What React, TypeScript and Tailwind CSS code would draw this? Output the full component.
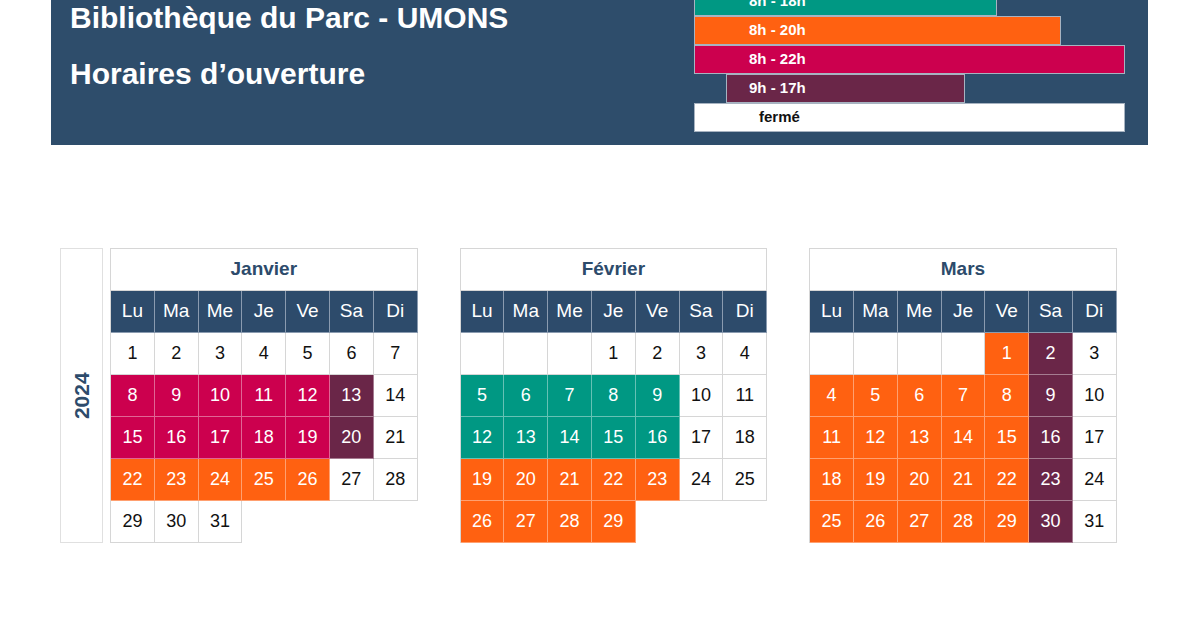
type Tone = "w" | "t" | "o" | "c" | "p";

const toneClass: Record<Tone, string> = {
  w: "bg-white text-[#111] border-[#d6d6d6]",
  t: "bg-[#009883] text-white border-white/40",
  o: "bg-[#ff6111] text-white border-white/40",
  c: "bg-[#cc004e] text-white border-white/40",
  p: "bg-[#6a2648] text-white border-white/40",
};

const days = ["Lu", "Ma", "Me", "Je", "Ve", "Sa", "Di"];

interface Month {
  name: string;
  offset: number;
  tones: Tone[];
}

// one letter per day of the month
const parse = (s: string) => s.split("") as Tone[];

const months: Month[] = [
  { name: "Janvier", offset: 0, tones: parse("wwwwwww" + "cccccpw" + "cccccpw" + "oooooww" + "www") },
  { name: "Février", offset: 3, tones: parse("wwww" + "tttttww" + "tttttww" + "oooooww" + "oooo") },
  { name: "Mars", offset: 4, tones: parse("opw" + "ooooopw" + "ooooopw" + "ooooopw" + "ooooopw") },
];

function Calendar({ month }: { month: Month }) {
  return (
    <div className="grid grid-cols-[repeat(7,43.8px)] border-l border-t border-[#d6d6d6] self-start">
      <div className="col-span-7 h-[42px] border-r border-b border-[#d6d6d6] flex items-center justify-center text-[19px] font-bold text-[#2d4b6b]">
        {month.name}
      </div>
      {days.map((d) => (
        <div
          key={d}
          className="h-[42px] bg-[#2d4b6b] border-r border-b border-[#8a9bb0] flex items-center justify-center text-[19px] text-white"
        >
          {d}
        </div>
      ))}
      {Array.from({ length: month.offset }).map((_, i) => (
        <div key={"e" + i} className="h-[42px] border-r border-b border-[#d6d6d6] bg-white" />
      ))}
      {month.tones.map((t, i) => (
        <div
          key={i}
          className={
            "h-[42px] border-r border-b flex items-center justify-center text-[18px] " + toneClass[t]
          }
        >
          {i + 1}
        </div>
      ))}
    </div>
  );
}

export default function App() {
  return (
    <div className="w-[1200px] h-[630px] bg-white overflow-hidden font-['Liberation_Sans',Arial,sans-serif]">
      {/* Header */}
      <div className="ml-[51px] w-[1097px] h-[145px] bg-[#2e4d6b] flex">
        <div className="w-[643px] flex-none pl-[19px] text-white font-bold text-[30px]">
          <div className="leading-[36px]">Bibliothèque du Parc - UMONS</div>
          <div className="leading-[36px] mt-[20px]">Horaires d’ouverture</div>
        </div>
        <div className="-mt-[13px] flex flex-col text-[15px] font-bold">
          <div className="h-[29px] w-[303px] bg-[#009883] border border-[#a7b3c1] flex items-center pl-[54px] text-white">
            8h - 18h
          </div>
          <div className="h-[29px] w-[367px] bg-[#ff6111] border border-[#a7b3c1] flex items-center pl-[54px] text-white">
            8h - 20h
          </div>
          <div className="h-[29px] w-[431px] bg-[#cc004e] border border-[#a7b3c1] flex items-center pl-[54px] text-white">
            8h - 22h
          </div>
          <div className="h-[29px] w-[239px] ml-[32px] bg-[#6a2648] border border-[#a7b3c1] flex items-center pl-[22px] text-white">
            9h - 17h
          </div>
          <div className="h-[29px] w-[431px] bg-white border border-[#a7b3c1] flex items-center pl-[64px] text-[#111]">
            fermé
          </div>
        </div>
      </div>

      {/* Calendars */}
      <div className="mt-[103px] pl-[60px] flex">
        <div className="w-[43px] h-[295px] border border-[#e0e0e0] flex items-center justify-center">
          <span className="inline-block -rotate-90 text-[21px] font-bold text-[#2d4b6b]">2024</span>
        </div>
        <div className="ml-[7px] flex gap-[42px]">
          {months.map((m) => (
            <Calendar key={m.name} month={m} />
          ))}
        </div>
      </div>
    </div>
  );
}
